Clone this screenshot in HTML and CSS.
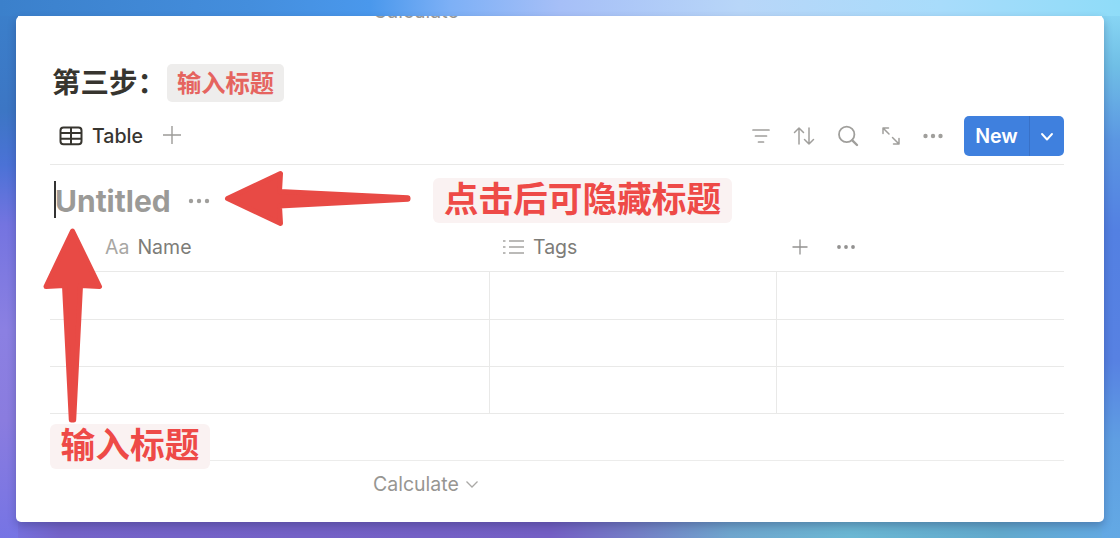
FILE: index.html
```html
<!DOCTYPE html>
<html lang="zh-CN">
<head>
<meta charset="utf-8">
<title>第三步：输入标题</title>
<link rel="stylesheet" href="styles.css">
</head>
<body>
<main class="card">
  <div class="clipped"><span>Calculate</span></div>
  <h1 class="step"><span>第三步：</span><code class="step-code">输入标题</code></h1>
  <div class="toolbar">
    <svg width="24" height="20" viewBox="0 0 24 20" fill="none" stroke="#37352f" stroke-width="2"><rect x="1.500" y="1.500" width="21" height="16.800" rx="3"/><path d="M1.500 7h21M1.500 12.700h21M12 1.500v17"/></svg>
    <span class="view-name">Table</span>
    <svg class="add-view" width="18" height="18" viewBox="0 0 18 18" stroke="#9c9b98" stroke-width="1.400"><path d="M9 0v18M0 9h18"/></svg>
    <div class="tools">
      <svg width="20" height="20" viewBox="0 0 20 20" fill="none" stroke="#a09f9c" stroke-width="1.700" stroke-linecap="round"><path d="M2 4h16M4.500 10h11M7.500 16h5"/></svg>
      <svg width="22" height="20" viewBox="0 0 22 20" fill="none" stroke="#a09f9c" stroke-width="1.500" stroke-linecap="round" stroke-linejoin="round"><path d="M6 18V2M1.500 6.500 6 2l4.500 4.500M16 2v16M11.500 13.500 16 18l4.500-4.500"/></svg>
      <svg width="22" height="22" viewBox="0 0 22 22" fill="none" stroke="#a09f9c" stroke-width="1.800" stroke-linecap="round"><circle cx="9.700" cy="9.400" r="7.700"/><path d="m15.300 15.300 4.700 4.700" stroke-width="2.400"/></svg>
      <svg width="20" height="20" viewBox="0 0 20 20" fill="none" stroke="#a09f9c" stroke-width="1.500" stroke-linecap="round" stroke-linejoin="round"><path d="M7.500 2H2v5.500M2 2l6 6M12.500 18H18v-5.500M18 18l-6.500-6.500"/></svg>
      <svg width="20" height="20" viewBox="0 0 20 20" fill="#a09f9c"><circle cx="2.500" cy="10" r="2.200"/><circle cx="10" cy="10" r="2.200"/><circle cx="17.500" cy="10" r="2.200"/></svg>
    </div>
    <button class="new"><span class="new-text">New</span><span class="new-more"><svg width="14" height="10" viewBox="0 0 14 10" fill="none" stroke="#fff" stroke-width="1.900" stroke-linecap="round" stroke-linejoin="round"><path d="m2 2 5 5.500L12 2"/></svg></span></button>
  </div>
  <div class="title-row">
    <span class="caret"></span><span class="untitled">Untitled</span>
    <svg width="22" height="6" viewBox="0 0 22 6" fill="#a09f9c"><circle cx="3" cy="3" r="2.200"/><circle cx="11" cy="3" r="2.200"/><circle cx="19" cy="3" r="2.200"/></svg>
  </div>
  <div class="table">
    <div class="head name"><span class="aa">Aa</span><span>Name</span></div>
    <div class="head tags"><svg width="21" height="16" viewBox="0 0 21 16" fill="none" stroke="#a5a4a1" stroke-width="1.700"><path d="M6 2h15M6 8h15M6 14h15M0 2h2.500M0 8h2.500M0 14h2.500"/></svg><span>Tags</span></div>
    <div class="head extra"><svg width="16" height="16" viewBox="0 0 16 16" stroke="#929190" stroke-width="1.300"><path d="M8 .5v15M.5 8h15"/></svg><svg width="18" height="6" viewBox="0 0 18 6" fill="#929190"><circle cx="2" cy="3" r="1.900"/><circle cx="9" cy="3" r="1.900"/><circle cx="16" cy="3" r="1.900"/></svg></div>
    <div class="cell"></div><div class="cell"></div><div class="cell end"></div>
    <div class="cell"></div><div class="cell"></div><div class="cell end"></div>
    <div class="cell"></div><div class="cell"></div><div class="cell end"></div>
    <div class="add-row"></div>
  </div>
  <div class="calculate"><span>Calculate</span><svg width="14" height="9" viewBox="0 0 14 9" fill="none" stroke="#aaa9a6" stroke-width="1.300"><path d="m1.500 1.500 5.500 5.500 5.500-5.500"/></svg></div>
</main>
<svg class="arrows" width="1120" height="538" viewBox="0 0 1120 538" fill="#e84a45" stroke="#e84a45" stroke-width="5" stroke-linejoin="round">
  <path d="M227.500 198.500 280.500 173.500 279.500 191.500 408 197.700V199.300L279.500 206 280.500 223.500Z"/>
  <path d="M72.500 231 99.500 286.500 80.500 285.500 73.700 420H71.300L64.500 285.500 46 286.500Z"/>
</svg>
<div class="note note-title">点击后可隐藏标题</div>
<div class="note note-input">输入标题</div>
</body>
</html>
```
FILE: styles.css
```css
* { box-sizing: border-box; }

body {
  margin: 0;
  width: 1120px;
  height: 538px;
  padding: 16px;
  overflow: hidden;
  position: relative;
  font-family: Inter, "Noto Sans CJK SC", sans-serif;
  color: #37352f;
  background:
    linear-gradient(to right, #3b80cb 0, #448edd 250px, #4a98ec 370px, #7db0f6 450px, #a6bff7 560px, #b8d6f8 740px, #a8dcfb 940px, #8fdcf8 1120px) 0 0 / 1120px 16px no-repeat,
    linear-gradient(to bottom, #3b80cb 0, #3c76c4 110px, #4b72d6 165px, #7474e0 225px, #8b80e2 330px, #8a7cdf 420px, #7674e4 538px) 0 0 / 18px 538px no-repeat,
    linear-gradient(to bottom, #8fdcf8 0, #70bfe6 65px, #5b97e2 140px, #5380e2 230px, #5781e2 360px, #5f9ee2 440px, #63a9e4 538px) 100% 0 / 18px 538px no-repeat,
    linear-gradient(to right, #7674e4 0, #7463c8 60px, #745fc4 550px, #7480c6 640px, #6fa5cd 730px, #6bb7d3 850px, #62a9cc 1000px, #63a9e4 1120px) 0 100% / 1120px 18px no-repeat;
}

.card {
  width: 1088px;
  height: 506px;
  padding: 0 40px 0 34px;
  background: #fff;
  border-radius: 5px;
  overflow: hidden;
  box-shadow: 0 4px 9px rgba(30, 35, 85, .3);
}

/* Tail of the previous table's footer, scrolled under the card's top edge */
.clipped {
  display: flex;
  align-items: flex-start;
  height: 47px;
  padding-left: 323px;
  color: #979692;
  font-size: 19.5px;
  line-height: 24px;
}
.clipped span { margin-top: -17px; }

.step {
  display: flex;
  align-items: center;
  height: 40px;
  margin: 0;
  padding-left: 2px;
  font-size: 28.5px;
  line-height: 38px;
  font-weight: 700;
}
.step-code {
  width: 117px;
  height: 38px;
  margin-left: 1px;
  font: 700 24.3px/38px Inter, "Noto Sans CJK SC", sans-serif;
  text-align: center;
  white-space: nowrap;
  color: #e5645f;
  background: #eeedec;
  border-radius: 5px;
}

.toolbar {
  display: flex;
  align-items: center;
  height: 62px;
  padding-left: 9px;
  padding-top: 4px;
  border-bottom: 1px solid #e9e9e8;
}
.view-name { margin-left: 9px; font-size: 19.6px; font-weight: 500; }
.add-view { margin: 0 0 2px 20px; }

.tools {
  display: flex;
  align-items: center;
  gap: 22px;
  margin-left: auto;
}

.new {
  display: flex;
  width: 100px;
  height: 40px;
  margin: 0 0 0 21px;
  padding: 0;
  border: 0;
  border-radius: 5px;
  background: #3f80de;
  color: #fff;
  font: 600 19.6px/40px Inter, sans-serif;
}
.new-text { width: 66px; border-right: 1px solid #3871c8; }
.new-more { flex: 1; display: flex; align-items: center; justify-content: center; height: 42px; }

.title-row {
  display: flex;
  align-items: center;
  height: 60px;
  padding: 11px 0 0 4px;
  margin-bottom: -2px;
}
.title-row svg { margin-left: 17px; }
.caret { width: 2px; height: 37px; margin-top: -2px; background: #333; }
.untitled { margin-left: -1px; font-size: 30px; font-weight: 700; color: #9b9a97; }

.table {
  display: grid;
  grid-template-columns: 440px 287px 287px;
  grid-template-rows: 49px 48px 47px 47px 47px;
}
.head {
  display: flex;
  align-items: center;
  color: #7d7c78;
  font-size: 19.5px;
  border-bottom: 1px solid #e9e9e8;
}
.name { padding-left: 55px; gap: 8px; }
.aa { color: #a8a7a4; }
.tags { padding-left: 13px; gap: 9px; }
.extra { padding-left: 15px; gap: 29px; }
.cell { border-right: 1px solid #e9e9e8; border-bottom: 1px solid #e9e9e8; }
.end { border-right: 0; }
.add-row { grid-column: 1 / -1; border-bottom: 1px solid #ececeb; }

.calculate {
  display: flex;
  align-items: center;
  gap: 6px;
  height: 46px;
  padding-left: 323px;
  color: #979692;
  font-size: 19.5px;
}

.arrows { position: absolute; left: 0; top: 0; }

.note {
  position: absolute;
  height: 45px;
  border-radius: 6px;
  background: #faf2f2;
  color: #ee4a47;
  font-size: 34.7px;
  font-weight: 700;
  line-height: 43px;
  text-align: center;
  white-space: nowrap;
}
.note-title { left: 433px; top: 178px; width: 299px; }
.note-input { left: 50px; top: 424px; width: 160px; }
```
